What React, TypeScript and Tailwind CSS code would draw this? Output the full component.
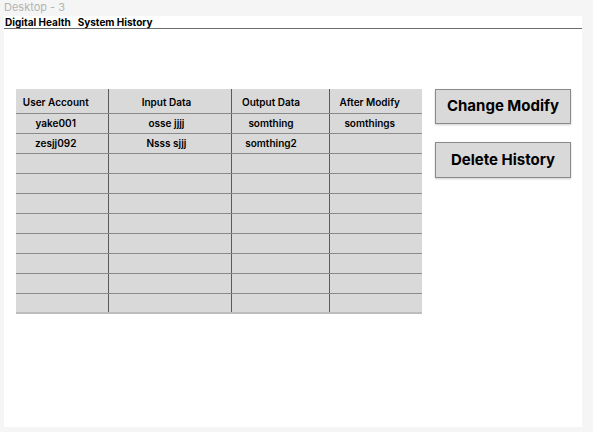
const columns = [
  { title: 'User Account', width: 'w-[92px]', pad: 'pr-[12px]' },
  { title: 'Input Data', width: 'w-[123px]', pad: 'pr-[6px]' },
  { title: 'Output Data', width: 'w-[98px]', pad: 'pr-[18px]' },
  { title: 'After Modify', width: 'w-[93px]', pad: 'pr-[12px]' },
]

const rows: string[][] = [
  ['yake001', 'osse jjjj', 'somthing', 'somthings'],
  ['zesjj092', 'Nsss sjjj', 'somthing2', ''],
  ...Array.from({ length: 8 }, () => ['', '', '', '']),
]

export default function App() {
  return (
    <div className="w-[593px] h-[432px] bg-[#f5f5f5] font-['Inter',sans-serif] overflow-hidden">
      <div className="h-[16px] pl-[4px] text-[11px] leading-[14px] text-[#b3b3b3]">Desktop - 3</div>
      <div className="ml-[4px] w-[578px] h-[411px] bg-white">
        <div className="h-[13px] border-b border-[#6b6b6b] pl-[1px] flex gap-[7px] text-[10px] leading-[12px] font-bold text-black">
          <span>Digital Health</span>
          <span>System History</span>
        </div>

        <div className="flex items-start gap-[13px] pl-[12px] pt-[60px]">
          <table className="border-collapse bg-[#d9d9d9] text-[10px] font-semibold text-black">
            <thead>
              <tr className="h-[24px]">
                {columns.map((c, i) => (
                  <th
                    key={c.title}
                    className={`${c.width} ${c.pad} pt-[3px] text-center font-semibold border-b border-[#8a8a8a] ${i > 0 ? 'border-l border-l-[#5a5a5a]' : ''}`}
                  >
                    {c.title}
                  </th>
                ))}
              </tr>
            </thead>
            <tbody>
              {rows.map((r, ri) => (
                <tr key={ri} className="h-[20px]">
                  {r.map((v, ci) => (
                    <td
                      key={ci}
                      className={`${columns[ci].pad} text-center p-0 ${ri < rows.length - 1 ? 'border-b border-[#8a8a8a]' : 'border-b-[2px] border-[#bdbdbd]'} ${ci > 0 ? 'border-l border-l-[#5a5a5a]' : ''}`}
                    >
                      {v}
                    </td>
                  ))}
                </tr>
              ))}
            </tbody>
          </table>

          <div className="flex flex-col gap-[18px]">
            <button className="w-[136px] h-[35px] bg-[#d9d9d9] border border-[#8a8a8a] shadow-[0_1px_2px_rgba(0,0,0,0.2)] text-[15px] font-bold text-black">
              Change Modify
            </button>
            <button className="w-[136px] h-[36px] bg-[#d9d9d9] border border-[#8a8a8a] shadow-[0_1px_2px_rgba(0,0,0,0.2)] text-[15px] font-bold text-black">
              Delete History
            </button>
          </div>
        </div>
      </div>
    </div>
  )
}
